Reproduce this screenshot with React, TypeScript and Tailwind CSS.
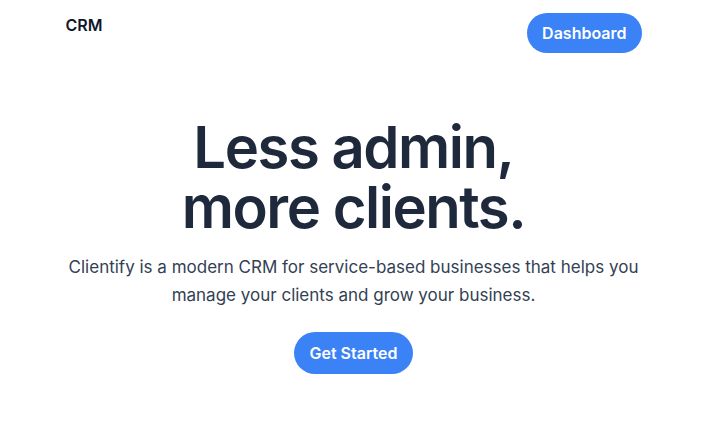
export default function App() {
  return (
    <div className="min-h-screen bg-white pr-2 font-['Inter','Liberation_Sans',sans-serif] text-[#1e293b]">
      <header className="mx-auto flex max-w-xl items-start justify-between pt-[13px]">
        <span className="font-semibold text-[#0f172a]">CRM</span>
        <button className="h-10 rounded-full bg-[#3b82f6] px-[15px] font-semibold text-white">Dashboard</button>
      </header>
      <main className="mx-auto flex max-w-xl flex-col items-center pt-16 text-center">
        <h1 className="text-[58px] leading-[60px] font-semibold tracking-tight">
          Less admin,
          <br />
          more clients.
        </h1>
        <p className="mt-4 text-[17px] leading-7 text-[#334155]">
          Clientify is a modern CRM for service-based businesses that helps you manage your clients and grow your business.
        </p>
        <button className="mt-[23px] h-[42px] rounded-full bg-[#3b82f6] px-[15px] font-semibold text-white">Get Started</button>
      </main>
    </div>
  );
}
